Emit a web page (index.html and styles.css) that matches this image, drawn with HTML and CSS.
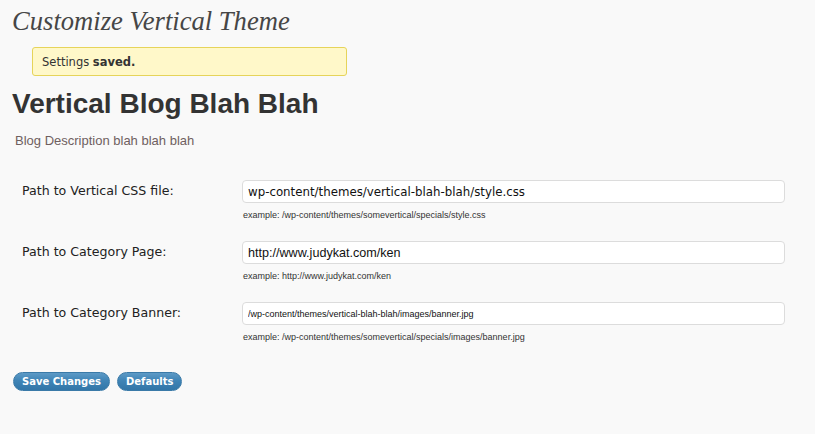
FILE: index.html
```html
<!DOCTYPE html>
<html>
<head>
<meta charset="utf-8">
<link rel="stylesheet" href="styles.css">
</head>
<body>
<div class="wrap">
  <h2 class="page-title">Customize Vertical Theme</h2>
  <div class="notice"><p>Settings <strong>saved.</strong></p></div>
  <h1 class="blog-title">Vertical Blog Blah Blah</h1>
  <p class="blog-desc">Blog Description blah blah blah</p>
  <div class="form-table">
    <div class="row">
      <label class="label">Path to Vertical CSS file:</label>
      <div class="field">
        <input class="text-input big" type="text" value="wp-content/themes/vertical-blah-blah/style.css">
        <p class="example">example: /wp-content/themes/somevertical/specials/style.css</p>
      </div>
    </div>
    <div class="row">
      <label class="label">Path to Category Page:</label>
      <div class="field">
        <input class="text-input big url" type="text" value="http://www.judykat.com/ken">
        <p class="example">example: http://www.judykat.com/ken</p>
      </div>
    </div>
    <div class="row">
      <label class="label">Path to Category Banner:</label>
      <div class="field">
        <input class="text-input small" type="text" value="/wp-content/themes/vertical-blah-blah/images/banner.jpg">
        <p class="example">example: /wp-content/themes/somevertical/specials/images/banner.jpg</p>
      </div>
    </div>
  </div>
  <div class="actions">
    <button class="btn" type="button">Save Changes</button>
    <button class="btn" type="button">Defaults</button>
  </div>
</div>
</body>
</html>
```

FILE: styles.css
```css
html, body {
  margin: 0;
  padding: 0;
  background: #f9f9f9;
}
body {
  font-family: "DejaVu Sans", "Liberation Sans", sans-serif;
  color: #333;
}
.wrap {
  padding: 0 0 0 12px;
}
.page-title {
  margin: 0;
  padding-top: 6px;
  height: 34px;
  font-family: "Liberation Serif", "DejaVu Serif", serif;
  font-style: italic;
  font-weight: normal;
  font-size: 26.6px;
  line-height: 30px;
  color: #464646;
}
.notice {
  margin: 7px 0 0 20px;
  width: 313px;
  height: 27px;
  background: #fff8c9;
  border: 1px solid #e6d45a;
  border-radius: 3px;
  display: flex;
  align-items: center;
}
.notice p {
  margin: 0 0 0 9px;
  font-family: "DejaVu Sans", sans-serif;
  font-size: 11.5px;
  color: #333;
}
.notice strong {
  font-weight: bold;
}
.blog-title {
  margin: 12px 0 0 0;
  font-family: "Liberation Sans", Arial, sans-serif;
  font-weight: bold;
  font-size: 28px;
  line-height: 32px;
  color: #333;
}
.blog-desc {
  margin: 13px 0 0 3px;
  font-family: "Liberation Sans", Arial, sans-serif;
  font-size: 13px;
  line-height: 16px;
  color: #6f6060;
}
.form-table {
  margin-top: 31px;
  padding-left: 10px;
  display: flex;
  flex-direction: column;
  gap: 20px;
}
.row {
  display: grid;
  grid-template-columns: 220px 543px;
  align-items: start;
}
.label {
  font-family: "DejaVu Sans", sans-serif;
  font-size: 12.6px;
  line-height: 21px;
  color: #222;
}
.field {
  display: flex;
  flex-direction: column;
}
.text-input {
  box-sizing: border-box;
  width: 543px;
  height: 23px;
  margin: 0;
  padding: 0 5px;
  background: #fff;
  border: 1px solid #dcdcdc;
  border-radius: 4px;
  color: #111;
  outline: none;
}
.text-input.big {
  font-family: "DejaVu Sans", sans-serif;
  font-size: 11.8px;
}
.text-input.big.url {
  font-family: "Liberation Sans", Arial, sans-serif;
  font-size: 12.6px;
}
.text-input.small {
  font-family: "Liberation Sans", Arial, sans-serif;
  font-size: 9px;
}
.example {
  margin: 7px 0 0 1px;
  font-family: "Liberation Sans", Arial, sans-serif;
  font-size: 9px;
  line-height: 11px;
  color: #333;
}
.actions {
  margin-top: 29px;
  display: flex;
  gap: 7px;
  padding-left: 1px;
}
.btn {
  height: 19px;
  padding: 0 8px;
  border: 1px solid #3a7aa8;
  border-radius: 10px;
  background: linear-gradient(#5d9ac6, #3f84b6 45%, #3276a8);
  color: #fff;
  font-family: "DejaVu Sans", sans-serif;
  font-weight: bold;
  font-size: 10px;
  line-height: 17px;
  cursor: pointer;
}
```
